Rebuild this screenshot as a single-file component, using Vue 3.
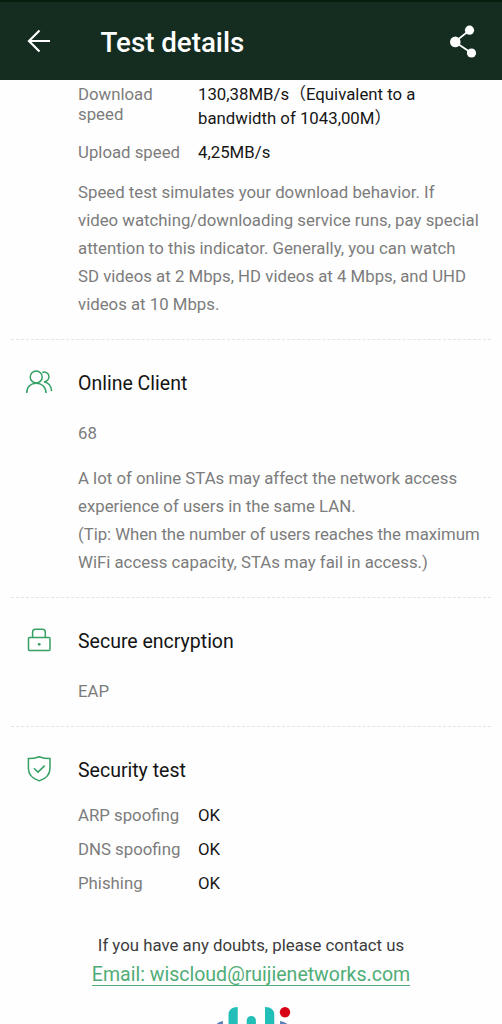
<script setup>
const speeds = [
  { label: ['Download', 'speed'], value: ['130,38MB/s（Equivalent to a', 'bandwidth of 1043,00M）'] },
  { label: ['Upload speed'], value: ['4,25MB/s'] },
]
const speedNote = [
  'Speed test simulates your download behavior. If',
  'video watching/downloading service runs, pay special',
  'attention to this indicator. Generally, you can watch',
  'SD videos at 2 Mbps, HD videos at 4 Mbps, and UHD',
  'videos at 10 Mbps.',
]
const clientNote = [
  'A lot of online STAs may affect the network access',
  'experience of users in the same LAN.',
  '(Tip: When the number of users reaches the maximum',
  'WiFi access capacity, STAs may fail in access.)',
]
const checks = [
  { name: 'ARP spoofing', result: 'OK' },
  { name: 'DNS spoofing', result: 'OK' },
  { name: 'Phishing', result: 'OK' },
]
</script>

<template>
  <div class="screen">
    <header class="bar">
      <svg class="back" viewBox="0 0 24 24" width="24" height="24">
        <path d="M23 12H2M12.500 1.500L2 12l10.500 10.500" />
      </svg>
      <h1>Test details</h1>
      <svg class="share" viewBox="0 0 28 34" width="28" height="34">
        <path d="M19.500 5.2L5 16.900 21.500 28" />
        <circle cx="19.500" cy="5.2" r="4.6" />
        <circle cx="5.300" cy="16.900" r="5.300" />
        <circle cx="21.500" cy="28" r="4.6" />
      </svg>
    </header>

    <section class="speed">
      <div v-for="(s, i) in speeds" :key="i" class="speed-row">
        <div class="label"><div v-for="l in s.label" :key="l"><span>{{ l }}</span></div></div>
        <div class="value"><div v-for="l in s.value" :key="l"><span>{{ l }}</span></div></div>
      </div>
      <div class="note"><div v-for="l in speedNote" :key="l"><span>{{ l }}</span></div></div>
    </section>

    <section class="block">
      <div class="head">
        <svg viewBox="0 0 28 28" width="28" height="28">
          <circle cx="11.2" cy="8.9" r="6" />
          <path d="M1.700 24.9C1.700 18.6 6 15.2 11.2 15.2S21 18.6 21 24.9" />
          <path d="M17.300 4.500a4.800 4.800 0 1 1 1.600 9.200M18.900 13.700c4.200 .8 7.400 4 7.700 9.400" />
        </svg>
        <h2>Online Client</h2>
      </div>
      <p class="single">68</p>
      <div class="note client"><div v-for="l in clientNote" :key="l"><span>{{ l }}</span></div></div>
    </section>

    <section class="block encryption">
      <div class="head">
        <svg viewBox="0 0 28 28" width="28" height="28">
          <rect x="3.5" y="11.5" width="21.5" height="13" rx="1" />
          <path d="M7.6 11.5V6.2Q7.6 3.2 10.4 3.2H17.4Q20.3 3.2 20.3 6.2V11.5" />
          <circle class="dot" cx="14.2" cy="18.3" r="1.4" />
        </svg>
        <h2>Secure encryption</h2>
      </div>
      <p class="single">EAP</p>
    </section>

    <section class="block">
      <div class="head">
        <svg viewBox="0 0 28 28" width="28" height="28">
          <path d="M14.2 1.7C17.4 3 21.2 3.6 25 3.6V13.2C25 19.5 20.5 23.8 14.2 25.9 7.9 23.8 3.4 19.5 3.4 13.2V3.6C7.2 3.6 11 3 14.2 1.7Z" />
          <path d="M8.9 13.2L13 17.1 19.7 10.6" />
        </svg>
        <h2>Security test</h2>
      </div>
      <div class="checks">
        <div v-for="c in checks" :key="c.name" class="check">
          <span class="name">{{ c.name }}</span><span class="ok">{{ c.result }}</span>
        </div>
      </div>
    </section>

    <footer>
      <p>If you have any doubts, please contact us</p>
      <a>Email: wiscloud@ruijienetworks.com</a>
      <svg class="logo" viewBox="0 0 84 20" width="84" height="20">
        <path class="blue" d="M7.500 20Q10 17.500 14 17V20ZM71 17Q75 17.500 78.500 20H71Z" />
        <path class="teal" d="M19.500 20V11Q19.500 3 28.700 3V20ZM37.700 20V16.5a4.6 4.6 0 0 1 9.2 0V20ZM56 3Q65.300 3 65.300 11V20H56Z" />
        <circle class="red" cx="76" cy="8.300" r="5.200" />
      </svg>
    </footer>
  </div>
</template>

<style>
body { margin: 0; background: #fefefe; }
</style>

<style scoped>
.screen {
  box-sizing: border-box;
  width: 502px;
  height: 1024px;
  overflow: hidden;
  display: flex;
  flex-direction: column;
  background: #fefefe;
  font-family: Roboto, "Noto Sans CJK SC", sans-serif;
  font-size: 16.8px;
  color: #7c7c7c;
  white-space: nowrap;
}
h1, h2, p { margin: 0; font-weight: 400; }
.bar {
  box-sizing: border-box;
  flex: none;
  height: 80px;
  padding: 2px 24px 0 27px;
  border-top: 2px solid #06200f;
  background: #142d20;
  display: flex;
  align-items: center;
}
.back { fill: none; stroke: #fff; stroke-width: 2.2; margin-bottom: 2px; }
.bar h1 {
  margin-left: 49.5px;
  padding-top: 1px;
  flex: 1;
  font-size: 27.7px;
  line-height: 34px;
  font-weight: 500;
  color: #fff;
}
.share { fill: #fff; margin: 0 0 1px 0; }
.share path { fill: none; stroke: #fff; stroke-width: 1.8; }
.speed { flex: none; height: 259px; padding: 2px 0 0 78px; box-sizing: border-box; }
.speed-row { display: flex; margin-bottom: 10px; }
.label { width: 120px; line-height: 20px; padding-top: 2px; }
.value { line-height: 24px; color: #161616; }
.speed .note { margin-top: 14px; }
.note { line-height: 28px; }
.block {
  flex: none;
  margin: 0 11px;
  padding: 29px 0 21px 15px;
  border-top: 1px dashed #e4e4e4;
}
.head { display: flex; align-items: center; height: 28px; }
.head svg { flex: none; margin: -3px 25px 0 -1px; fill: none; stroke: #35a165; stroke-width: 1.5; }
.head svg .dot { fill: #35a165; stroke: none; }
h2 { font-size: 19.5px; color: #141414; }
.single { margin: 22px 0 0 52px; line-height: 28px; }
.block .note { margin: 17px 0 0 52px; }
.client div:nth-child(3) { letter-spacing: -0.05px; }
.checks { margin: 14px 0 0 52px; }
.check { display: flex; height: 34px; line-height: 34px; }
.name { width: 120px; }
.ok { color: #161616; }
footer { display: flex; flex-direction: column; align-items: center; }
footer p { line-height: 24px; color: #3c3c3c; margin-top: 12px; }
footer a { font-size: 19.55px; line-height: 28px; height: 24px; margin-top: 4px; color: #50ad77; border-bottom: 1px solid #50ad77; }
.logo { margin-top: 18px; }
.teal { fill: #22bfb8; }
.blue { fill: #5b82b8; }
.red { fill: #d60017; }
</style>
